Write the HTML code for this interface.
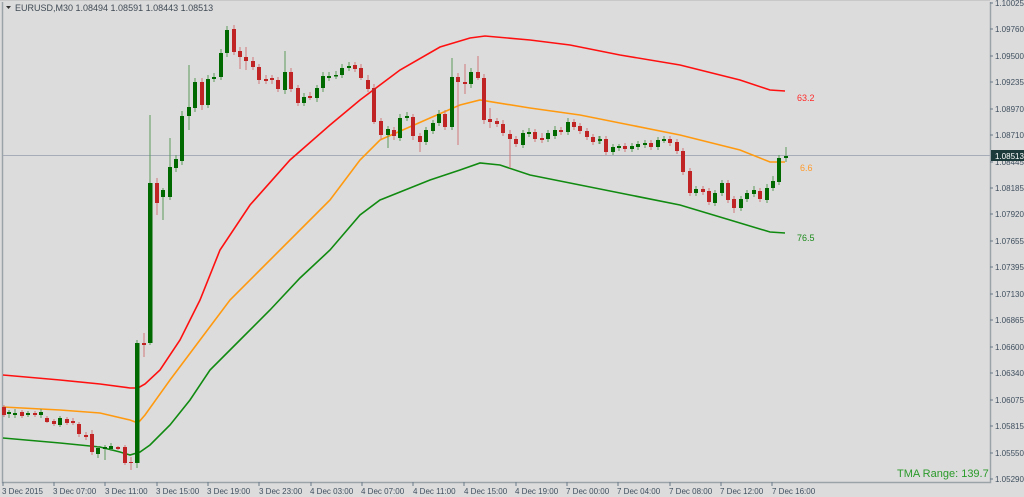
<!DOCTYPE html>
<html><head><meta charset="utf-8"><style>
html,body{margin:0;padding:0;background:#dcdcdc;}
svg{display:block;font-family:"Liberation Sans",sans-serif;}
</style></head><body>
<svg width="1024" height="497" viewBox="0 0 1024 497" xmlns="http://www.w3.org/2000/svg">
<rect width="1024" height="497" fill="#dcdcdc"/>
<!-- frame -->
<path d="M2.5 2V482.5H990.5V2" fill="none" stroke="#9aa4a8" stroke-width="1.5"/>
<line x1="0" y1="0.5" x2="990" y2="0.5" stroke="#c8c8c8"/>
<!-- current price line -->
<line x1="3" y1="155.5" x2="990" y2="155.5" stroke="#a6adb8" stroke-width="1"/>
<!-- header -->
<path d="M6 6H11L8.5 9Z" fill="#333"/>
<text x="15" y="11" font-size="9" fill="#404a55">EURUSD,M30  1.08494 1.08591 1.08443 1.08513</text>
<!-- bands -->
<polyline fill="none" stroke="#ff1010" stroke-width="1.6" points="3,375 60,380 100,384 130,388 138,388 145,384 160,370 180,340 200,300 220,250 250,205 290,160 330,125 360,100 400,70 440,47 470,38 485,36 530,40 570,45 620,55 680,65 740,80 770,90 785,91"/>
<polyline fill="none" stroke="#ff9a10" stroke-width="1.6" points="3,407 60,410 100,413 130,420 138,423 145,415 170,380 200,340 230,300 260,270 300,230 330,200 360,160 380,140 430,118 460,105 480,100 530,108 580,115 630,125 680,135 740,150 770,162 785,162"/>
<polyline fill="none" stroke="#108a10" stroke-width="1.6" points="3,438 60,443 100,447 120,452 130,455 140,452 150,445 170,425 190,400 210,370 240,340 270,310 300,278 330,250 360,215 380,200 430,180 460,170 480,163 500,165 530,175 580,185 630,195 680,205 730,220 770,232 785,233"/>
<text x="797" y="101" font-size="9" fill="#ff2a2a">63.2</text>
<text x="800" y="171" font-size="9" fill="#ff9a2a">6.6</text>
<text x="797" y="241" font-size="9" fill="#1a8a1a">76.5</text>
<!-- wicks -->
<g stroke-width="1">
<path stroke="#d07878" d="M4 405V417M22 410V418M35 411V417M47 416V423M54 419V426M67 417V425M73 418V425M79 422V437M86 432V440M92 430V455M118 446V450M125 445V465M131 457V470M144 333V357M157 178V215M202 78V110M234 25V55M240 47V69M246 47V70M253 57V70M259 64V84M266 75V84M272 75V84M278 77V92M291 68V92M298 85V106M310 92V100M355 62V72M361 64V80M368 75V92M374 84V124M381 118V140M394 127V140M413 114V140M420 133V152M445 110V130M458 73V145M465 64V94M478 56V80M484 74V124M490 108V128M497 118V127M503 120V136M510 130V168M516 136V147M535 129V142M542 133V143M561 127V135M574 119V130M580 123V134M587 128V140M593 134V145M606 136V155M625 143V152M651 140V150M670 136V146M677 139V154M683 148V175M690 168V196M703 186V195M709 188V205M728 180V203M734 196V213M760 188V202"/>
<path stroke="#5a9a5a" d="M9 410V418M15 409V418M28 411V417M41 409V418M60 416V427M98 446V458M105 445V460M111 443V451M137 340V468M150 115V345M163 188V220M170 138V200M176 155V172M182 111V165M189 65V130M195 78V112M208 75V108M214 73V82M221 49V80M227 26V57M285 51V94M304 93V106M317 85V102M323 72V92M329 72V81M336 71V79M342 64V78M349 62V71M388 126V148M400 114V141M407 112V121M426 127V145M433 120V134M439 110V126M452 58V130M471 68V88M523 130V148M529 128V137M548 130V142M555 126V139M568 118V135M599 136V144M600 136V144M613 144V155M619 144V151M632 143V152M638 141V150M645 140V148M658 137V150M664 136V143M696 186V196M715 190V206M722 180V196M741 196V211M747 190V202M754 186V197M767 184V203M773 176V191M779 155V185M786 147V162"/>
</g>
<!-- bodies -->
<g fill="#c02424">
<rect x="2" y="407" width="4" height="8"/><rect x="20" y="412" width="4" height="4"/><rect x="33" y="413" width="4" height="2"/><rect x="45" y="418" width="4" height="4"/><rect x="52" y="421" width="4" height="3"/><rect x="65" y="419" width="4" height="4"/><rect x="71" y="421" width="4" height="2"/><rect x="77" y="424" width="4" height="10"/><rect x="84" y="435" width="4" height="2"/><rect x="90" y="434" width="4" height="18"/><rect x="116" y="447" width="4" height="2"/><rect x="123" y="447" width="4" height="16"/><rect x="129" y="462" width="4" height="1"/><rect x="142" y="343" width="4" height="2"/><rect x="155" y="183" width="4" height="20"/><rect x="200" y="82" width="4" height="23"/><rect x="232" y="29" width="4" height="23"/><rect x="238" y="51" width="4" height="6"/><rect x="244" y="57" width="4" height="4"/><rect x="251" y="61" width="4" height="6"/><rect x="257" y="67" width="4" height="13"/><rect x="264" y="79" width="4" height="2"/><rect x="270" y="78" width="4" height="2"/><rect x="276" y="80" width="4" height="9"/><rect x="289" y="72" width="4" height="17"/><rect x="296" y="88" width="4" height="15"/><rect x="308" y="96" width="4" height="2"/><rect x="353" y="65" width="4" height="4"/><rect x="359" y="68" width="4" height="10"/><rect x="366" y="80" width="4" height="9"/><rect x="372" y="88" width="4" height="34"/><rect x="379" y="121" width="4" height="14"/><rect x="392" y="130" width="4" height="6"/><rect x="411" y="117" width="4" height="19"/><rect x="418" y="136" width="4" height="6"/><rect x="443" y="114" width="4" height="13"/><rect x="456" y="77" width="4" height="5"/><rect x="463" y="82" width="4" height="2"/><rect x="476" y="72" width="4" height="6"/><rect x="482" y="78" width="4" height="42"/><rect x="488" y="119" width="4" height="3"/><rect x="495" y="121" width="4" height="3"/><rect x="501" y="124" width="4" height="9"/><rect x="508" y="134" width="4" height="5"/><rect x="514" y="139" width="4" height="5"/><rect x="533" y="132" width="4" height="7"/><rect x="540" y="138" width="4" height="2"/><rect x="559" y="130" width="4" height="2"/><rect x="572" y="122" width="4" height="5"/><rect x="578" y="126" width="4" height="5"/><rect x="585" y="131" width="4" height="6"/><rect x="591" y="137" width="4" height="5"/><rect x="604" y="139" width="4" height="13"/><rect x="623" y="146" width="4" height="3"/><rect x="649" y="143" width="4" height="4"/><rect x="668" y="139" width="4" height="4"/><rect x="675" y="142" width="4" height="9"/><rect x="681" y="151" width="4" height="21"/><rect x="688" y="171" width="4" height="22"/><rect x="701" y="189" width="4" height="3"/><rect x="707" y="191" width="4" height="11"/><rect x="726" y="183" width="4" height="17"/><rect x="732" y="199" width="4" height="9"/><rect x="758" y="191" width="4" height="8"/>
</g>
<g fill="#006a00">
<rect x="7" y="412" width="4" height="2"/><rect x="13" y="413" width="4" height="2"/><rect x="26" y="413" width="4" height="2"/><rect x="39" y="412" width="4" height="3"/><rect x="58" y="418" width="4" height="7"/><rect x="96" y="448" width="4" height="6"/><rect x="103" y="447" width="4" height="2"/><rect x="109" y="446" width="4" height="3"/><rect x="135" y="343" width="4.5" height="120"/><rect x="148" y="183" width="4.5" height="160"/><rect x="161" y="190" width="4" height="7"/><rect x="168" y="167" width="4" height="30"/><rect x="174" y="159" width="4" height="9"/><rect x="180" y="116" width="4" height="45"/><rect x="187" y="107" width="4" height="9"/><rect x="193" y="82" width="4" height="26"/><rect x="206" y="79" width="4" height="26"/><rect x="212" y="77" width="4" height="2"/><rect x="219" y="53" width="4" height="24"/><rect x="225" y="30" width="4" height="23"/><rect x="283" y="72" width="4" height="18"/><rect x="302" y="97" width="4" height="6"/><rect x="315" y="88" width="4" height="10"/><rect x="321" y="76" width="4" height="12"/><rect x="327" y="76" width="4" height="2"/><rect x="334" y="75" width="4" height="1.5"/><rect x="340" y="68" width="4" height="7"/><rect x="347" y="66" width="4" height="2"/><rect x="386" y="129" width="4" height="6"/><rect x="398" y="118" width="4" height="20"/><rect x="405" y="116" width="4" height="2"/><rect x="424" y="130" width="4" height="12"/><rect x="431" y="123" width="4" height="8"/><rect x="437" y="114" width="4" height="9"/><rect x="450" y="77" width="4" height="50"/><rect x="469" y="72" width="4" height="12"/><rect x="521" y="133" width="4" height="12"/><rect x="527" y="132" width="4" height="2"/><rect x="546" y="133" width="4" height="6"/><rect x="553" y="130" width="4" height="6"/><rect x="566" y="122" width="4" height="10"/><rect x="598" y="139" width="4" height="2"/><rect x="611" y="147" width="4" height="5"/><rect x="617" y="146" width="4" height="2"/><rect x="630" y="146" width="4" height="3"/><rect x="636" y="144" width="4" height="3"/><rect x="643" y="143" width="4" height="2"/><rect x="656" y="140" width="4" height="7"/><rect x="662" y="139" width="4" height="2"/><rect x="694" y="189" width="4" height="4"/><rect x="713" y="193" width="4" height="10"/><rect x="720" y="183" width="4" height="10"/><rect x="739" y="199" width="4" height="9"/><rect x="745" y="193" width="4" height="6"/><rect x="752" y="190" width="4" height="4"/><rect x="765" y="188" width="4" height="12"/><rect x="771" y="181" width="4" height="7"/><rect x="777" y="158" width="4" height="24"/><rect x="784" y="156" width="4" height="2"/>
</g>
<!-- price axis -->
<g font-size="8" fill="#3f4f5f">
<text x="995" y="6">1.10025</text><text x="995" y="32">1.09760</text><text x="995" y="59">1.09500</text><text x="995" y="85">1.09235</text><text x="995" y="112">1.08970</text><text x="995" y="138">1.08710</text><text x="995" y="165">1.08445</text><text x="995" y="191">1.08185</text><text x="995" y="217">1.07920</text><text x="995" y="244">1.07655</text><text x="995" y="270">1.07395</text><text x="995" y="297">1.07130</text><text x="995" y="323">1.06865</text><text x="995" y="350">1.06600</text><text x="995" y="376">1.06340</text><text x="995" y="403">1.06075</text><text x="995" y="429">1.05815</text><text x="995" y="456">1.05550</text><text x="995" y="482">1.05290</text>
</g>
<g stroke="#6a7a88"><path d="M990 3H993M990 29H993M990 56H993M990 82H993M990 109H993M990 135H993M990 162H993M990 188H993M990 214H993M990 241H993M990 267H993M990 294H993M990 320H993M990 347H993M990 373H993M990 400H993M990 426H993M990 453H993M990 479H993"/></g>
<rect x="991" y="150" width="33" height="11" fill="#1d3a3a"/>
<text x="995" y="159" font-size="8" fill="#ffffff">1.08513</text>
<!-- time axis -->
<g stroke="#6a7a88"><path d="M3 482V486M54 482V486M105 482V486M157 482V486M208 482V486M259 482V486M311 482V486M362 482V486M413 482V486M464 482V486M516 482V486M567 482V486M618 482V486M670 482V486M721 482V486M772 482V486"/></g>
<g font-size="8" fill="#3f4f5f">
<text x="2" y="494">3 Dec 2015</text><text x="53" y="494">3 Dec 07:00</text><text x="105" y="494">3 Dec 11:00</text><text x="156" y="494">3 Dec 15:00</text><text x="207" y="494">3 Dec 19:00</text><text x="259" y="494">3 Dec 23:00</text><text x="310" y="494">4 Dec 03:00</text><text x="361" y="494">4 Dec 07:00</text><text x="413" y="494">4 Dec 11:00</text><text x="464" y="494">4 Dec 15:00</text><text x="515" y="494">4 Dec 19:00</text><text x="566" y="494">7 Dec 00:00</text><text x="617" y="494">7 Dec 04:00</text><text x="669" y="494">7 Dec 08:00</text><text x="720" y="494">7 Dec 12:00</text><text x="772" y="494">7 Dec 16:00</text>
</g>
<text x="897" y="477" font-size="11" fill="#2a9a2a">TMA Range: 139.7</text>
</svg>
</body></html>
